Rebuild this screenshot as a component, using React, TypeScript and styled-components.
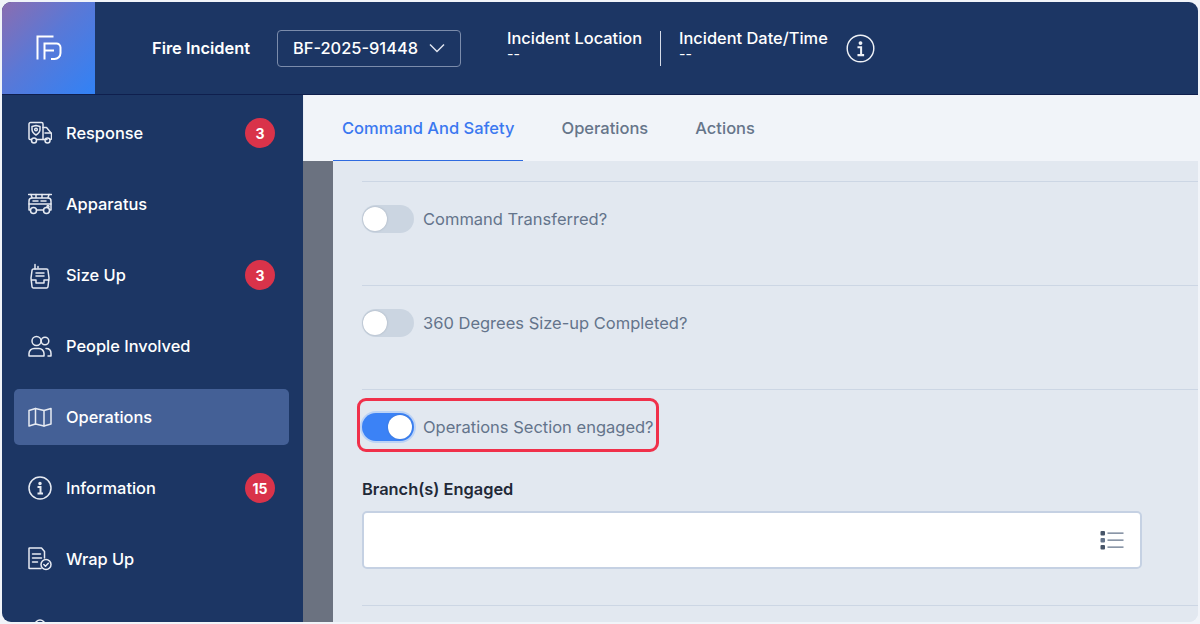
import React from 'react';
import styled, { createGlobalStyle } from 'styled-components';

const Global = createGlobalStyle`
  html, body { margin: 0; padding: 0; background: #f1f4f9; overflow: hidden; }
  * { box-sizing: border-box; }
`;

const Page = styled.div`
  width: 1200px;
  height: 624px;
  padding: 2px;
  font-family: Inter, "Liberation Sans", sans-serif;
`;
const Frame = styled.div`
  position: relative;
  width: 1196px;
  height: 620px;
  border-radius: 9px;
  overflow: hidden;
  display: flex;
  flex-direction: column;
  background: #e2e8f0;
`;
const Header = styled.header`
  flex: 0 0 92px;
  display: flex;
  align-items: center;
  background: #1c3664;
  border-bottom: 1px solid #0f1f4d;
  color: #fff;
`;
const Logo = styled.div`
  width: 93px;
  height: 92px;
  display: flex;
  align-items: center;
  justify-content: center;
  background: linear-gradient(135deg, #8b6db0 0%, #5a78d6 45%, #3182f6 100%);
`;
const Title = styled.div`
  margin-left: 57px;
  font-size: 16.4px;
  font-weight: 600;
  width: 125px;
`;
const Select = styled.div`
  width: 184px;
  height: 37px;
  border: 1px solid #7b8cab;
  border-radius: 4px;
  display: flex;
  align-items: center;
  padding-left: 15px;
  gap: 10px;
  font-size: 16.4px;
  font-weight: 500;
`;
const MetaGroup = styled.div`
  display: flex;
  align-items: center;
  margin-left: 46px;
`;
const Meta = styled.div`
  display: flex;
  flex-direction: column;
  margin-bottom: 5px;
`;
const MetaLabel = styled.span`
  font-size: 16.4px;
  font-weight: 500;
  line-height: 16px;
`;
const MetaValue = styled.span`
  font-size: 14px;
  line-height: 16px;
`;
const Divider = styled.div`
  width: 1px;
  height: 35px;
  background: #d6dce8;
  margin: 0 18px;
`;
const InfoButton = styled.span`
  display: flex;
  margin-left: 18px;
  color: #eef1f6;
`;
const Body = styled.div`
  flex: 1;
  display: flex;
  min-height: 0;
`;
const Sidebar = styled.nav`
  width: 301px;
  padding: 10px 14px 0 12px;
  background: #1c3664;
  display: flex;
  flex-direction: column;
  gap: 15px;
  overflow: hidden;
`;
const NavItem = styled.div<{ $active?: boolean }>`
  flex: 0 0 56px;
  display: flex;
  align-items: center;
  padding: 0 14px;
  border-radius: 5px;
  color: #fff;
  font-size: 16.4px;
  font-weight: 500;
  background: ${p => (p.$active ? '#446096' : 'transparent')};
`;
const NavIcon = styled.span`
  width: 24px;
  height: 24px;
  margin-right: 14px;
  display: flex;
  color: #e6eaf2;
`;
const NavLabel = styled.span`
  flex: 1;
`;
const Badge = styled.span`
  width: 30px;
  height: 30px;
  border-radius: 50%;
  background: #d9334a;
  color: #fff;
  font-size: 14px;
  font-weight: 700;
  display: flex;
  align-items: center;
  justify-content: center;
`;
const Main = styled.main`
  flex: 1;
  display: flex;
  flex-direction: column;
  min-width: 0;
`;
const Tabs = styled.div`
  flex: 0 0 66px;
  display: flex;
  padding-left: 29px;
  background: #f1f4f9;
  border-left: 1px solid #e8edf5;
`;
const Tab = styled.div<{ $active?: boolean }>`
  padding: 0 9px;
  margin-right: 29px;
  display: flex;
  align-items: center;
  font-size: 16.5px;
  font-weight: 500;
  color: ${p => (p.$active ? '#3b78f0' : '#66758a')};
  border-bottom: 1px solid ${p => (p.$active ? '#2f6be0' : 'transparent')};
`;
const ContentWrap = styled.div`
  flex: 1;
  display: flex;
  min-height: 0;
`;
const Gutter = styled.div`
  width: 30px;
  background: #6b7280;
`;
const Content = styled.div`
  flex: 1;
  padding: 20px 0 0 29px;
  background: #e2e8f0;
`;
const Section = styled.section<{ $h: number }>`
  height: ${p => p.$h}px;
  padding-top: 22px;
  border-top: 1px solid #ccd6e4;
`;
const ToggleRow = styled.div`
  display: flex;
  align-items: center;
  gap: 9px;
  height: 29px;
`;
const Toggle = styled.div<{ $on?: boolean }>`
  position: relative;
  width: 52px;
  height: 28px;
  border-radius: 14px;
  background: ${p => (p.$on ? '#3b82f6' : '#cbd5e1')};
  box-shadow: ${p => (p.$on ? '0 0 0 2px #bcd3f6' : 'none')};
  &::after {
    content: '';
    position: absolute;
    top: 2px;
    left: ${p => (p.$on ? '26px' : '1px')};
    width: 24px;
    height: 24px;
    border-radius: 50%;
    background: #fff;
    box-shadow: 0 0 2px rgba(71, 85, 105, 0.35);
  }
`;
const ToggleLabel = styled.span`
  font-size: 16.5px;
  color: #64748b;
`;
const FieldLabel = styled.div`
  margin-top: 38px;
  font-size: 16.4px;
  font-weight: 600;
  color: #1f2937;
`;
const Field = styled.div`
  margin-top: 12px;
  width: 780px;
  height: 58px;
  background: #fff;
  border: 2px solid #c5d1e3;
  border-radius: 5px;
  display: flex;
  align-items: center;
  justify-content: flex-end;
  padding-right: 16px;
`;
const Highlight = styled.div`
  position: absolute;
  left: 355px;
  top: 396px;
  width: 302px;
  height: 54px;
  border: 3px solid #f0304a;
  border-radius: 9px;
  pointer-events: none;
`;

const IStroke = { fill: 'none', stroke: 'currentColor', strokeWidth: 1.5, strokeLinecap: 'round' as const, strokeLinejoin: 'round' as const };

const Ambulance = () => (
  <svg width="24" height="24" viewBox="0 0 24 24" {...IStroke}>
    <path d="M3 18.500H2a1 1 0 0 1-1-1V3a1.500 1.500 0 0 1 1.500-1.500h11A1.500 1.500 0 0 1 15 3v15.500" />
    <path d="M9 18.500h10" /><path d="M15 6.500h3.500l5 6v5a1 1 0 0 1-1 1h-.500" /><path d="M17 12h6" />
    <circle cx="6" cy="19.500" r="2.500" /><circle cx="19.500" cy="19.500" r="2.500" />
    <path d="M8 14s-4-2.500-4-5.500V5.500l4-1 4 1v3c0 3-4 5.500-4 5.500z" /><circle cx="8" cy="8.500" r="1.300" />
  </svg>
);
const Engine = () => (
  <svg width="24" height="24" viewBox="0 0 24 24" {...IStroke}>
    <path d="M0.500 2.500h23" /><path d="M3 2.500l1 3M8 2.500v3M14 2.500v3M21 2.500l-1 3" />
    <path d="M2 18H1V9a3 3 0 0 1 3-3h16a3 3 0 0 1 3 3v9h-1" />
    <path d="M1 12h22" /><path d="M8.500 18h7" />
    <circle cx="5.500" cy="18.500" r="3" /><circle cx="18.500" cy="18.500" r="3" />
    <path d="M5 9h5M13 9h5" /><circle cx="20" cy="14.500" r="1" />
  </svg>
);
const Radio = () => (
  <svg width="24" height="26" viewBox="0 0 24 26" {...IStroke}>
    <path d="M7 6V1.500M10 5V3.500" />
    <path d="M5.500 6h13a1.500 1.500 0 0 1 1.500 1.500L21 15l-1 8.500a1.500 1.500 0 0 1-1.500 1.500h-13A1.500 1.500 0 0 1 4 23.500L3 15l1-7.500A1.500 1.500 0 0 1 5.500 6z" />
    <path d="M3.500 17h4.500v3h8v-3h4.500" /><path d="M8 10h8M8 13h8" />
  </svg>
);
const People = () => (
  <svg width="24" height="24" viewBox="0 0 24 24" {...IStroke}>
    <circle cx="8.500" cy="7" r="4.500" /><circle cx="17" cy="7" r="3.800" />
    <path d="M1 22v-2.500c0-3 2.500-5 5-5h5c2.500 0 5 2 5 5V22z" /><path d="M18 14.500c2.500 0 5 1.500 5 5V22h-3" />
  </svg>
);
const MapIcon = () => (
  <svg width="24" height="24" viewBox="0 0 24 24" {...IStroke}>
    <path d="M1 5.500l6.500-2 8.500 2 7-2v15.500l-7 2-8.500-2-6.500 2z" /><path d="M7.500 3.500V19M16 5.500V21" />
  </svg>
);
const InfoIcon = ({ size = 24, w = 1.5 }: { size?: number; w?: number }) => (
  <svg width={size} height={size} viewBox="0 0 24 24" fill="none" stroke="currentColor" strokeWidth={w}>
    <circle cx="12" cy="12" r="11" />
    <circle cx="12" cy="7.500" r="1" fill="currentColor" />
    <path d="M9.500 11H12.500V17M9.500 17.500H15" strokeWidth={w + 0.5} />
  </svg>
);
const WrapIcon = () => (
  <svg width="24" height="24" viewBox="0 0 24 24" {...IStroke}>
    <path d="M13 21.500H1.500a.500.500 0 0 1-.500-.500V1.500A.500.500 0 0 1 1.500 1h12l3 3.500v6.500" />
    <path d="M4.500 7h8M4.500 11h9M4.500 15h5" />
    <circle cx="18" cy="17.500" r="5" /><path d="M15.800 17.500l1.700 1.700 2.800-3" />
  </svg>
);
const Gear = () => (
  <svg width="24" height="24" viewBox="0 0 24 24" {...IStroke}>
    <circle cx="12" cy="7" r="5" /><path d="M3 22c0-5 4-8 9-8s9 3 9 8" />
  </svg>
);
const LogoMark = () => (
  <svg width="26" height="26" viewBox="0 0 26 26" fill="none" stroke="#fff" strokeWidth="2">
    <path d="M1.500 24.500V1.500H17.500" /><path d="M8.500 24.500V8.500H20a4 4 0 0 1 4.500 4v5.500a6 6 0 0 1-6 6H15" /><path d="M8.500 15.500H18" />
  </svg>
);
const ListIcon = () => (
  <svg width="24" height="20" viewBox="0 0 24 20" fill="none">
    <rect x="0.500" y="1" width="4.500" height="4.500" rx="1" fill="#475569" />
    <rect x="0.500" y="8" width="4.500" height="4.500" rx="1" fill="#64748b" />
    <rect x="0.500" y="15" width="4.500" height="4.500" rx="1" fill="#475569" />
    <path d="M7.500 3.200h16M7.500 10.200h16M7.500 17.200h16" stroke="#64748b" strokeWidth="1.300" />
  </svg>
);
const Chevron = () => (
  <svg width="18" height="18" viewBox="0 0 18 18" fill="none" stroke="#dfe5f0" strokeWidth="1.500">
    <path d="M2 5.500l7 7 7-7" />
  </svg>
);

const items: { label: string; icon: React.ReactNode; badge?: number; active?: boolean }[] = [
  { label: 'Response', icon: <Ambulance />, badge: 3 },
  { label: 'Apparatus', icon: <Engine /> },
  { label: 'Size Up', icon: <Radio />, badge: 3 },
  { label: 'People Involved', icon: <People /> },
  { label: 'Operations', icon: <MapIcon />, active: true },
  { label: 'Information', icon: <InfoIcon />, badge: 15 },
  { label: 'Wrap Up', icon: <WrapIcon /> },
  { label: 'Scene Info', icon: <Gear /> },
];

export default function App() {
  return (
    <Page>
      <Global />
      <Frame>
        <Header>
          <Logo><LogoMark /></Logo>
          <Title>Fire Incident</Title>
          <Select>BF-2025-91448 <Chevron /></Select>
          <MetaGroup>
            <Meta><MetaLabel>Incident Location</MetaLabel><MetaValue>--</MetaValue></Meta>
            <Divider />
            <Meta><MetaLabel>Incident Date/Time</MetaLabel><MetaValue>--</MetaValue></Meta>
            <InfoButton><InfoIcon size={29} w={1.2} /></InfoButton>
          </MetaGroup>
        </Header>
        <Body>
          <Sidebar>
            {items.map(i => (
              <NavItem key={i.label} $active={i.active}>
                <NavIcon>{i.icon}</NavIcon>
                <NavLabel>{i.label}</NavLabel>
                {i.badge != null && <Badge>{i.badge}</Badge>}
              </NavItem>
            ))}
          </Sidebar>
          <Main>
            <Tabs>
              <Tab $active>Command And Safety</Tab>
              <Tab>Operations</Tab>
              <Tab>Actions</Tab>
            </Tabs>
            <ContentWrap>
              <Gutter />
              <Content>
                <Section $h={104}><ToggleRow><Toggle /><ToggleLabel>Command Transferred?</ToggleLabel></ToggleRow></Section>
                <Section $h={104}><ToggleRow><Toggle /><ToggleLabel>360 Degrees Size-up Completed?</ToggleLabel></ToggleRow></Section>
                <Section $h={216}>
                  <ToggleRow><Toggle $on /><ToggleLabel>Operations Section engaged?</ToggleLabel></ToggleRow>
                  <FieldLabel>Branch(s) Engaged</FieldLabel>
                  <Field><ListIcon /></Field>
                </Section>
                <Section $h={20} />
              </Content>
            </ContentWrap>
          </Main>
        </Body>
        <Highlight />
      </Frame>
    </Page>
  );
}
